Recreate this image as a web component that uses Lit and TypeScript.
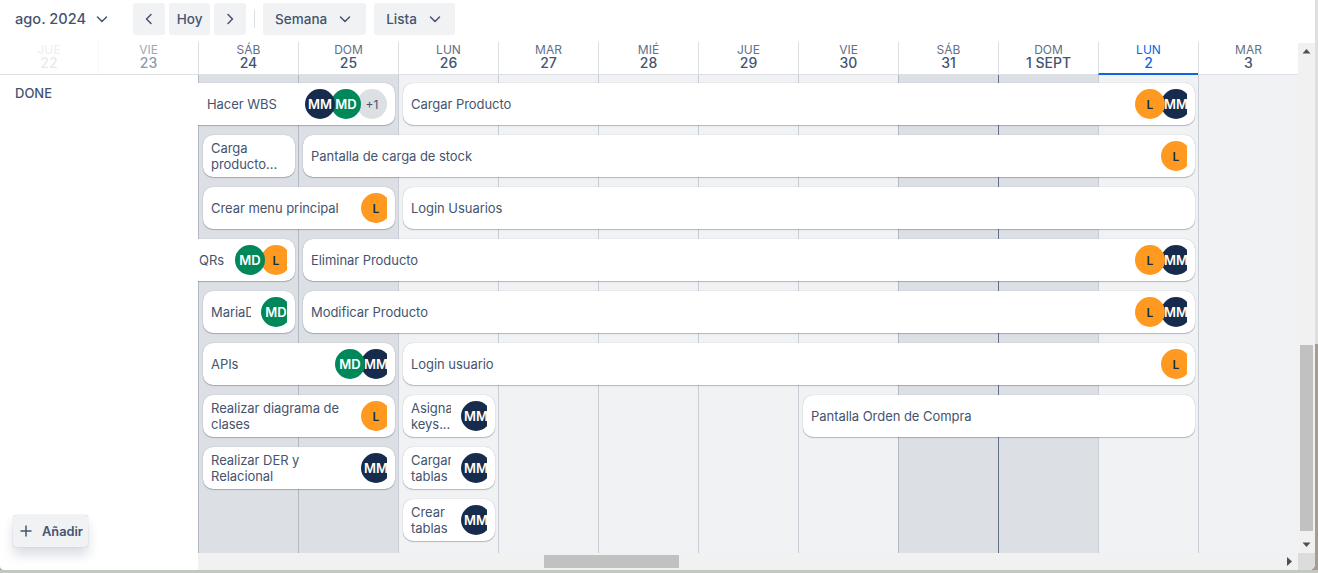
import { LitElement, css, html, nothing, svg } from 'lit'
import { customElement } from 'lit/decorators.js'

type Who = 'MM' | 'MD' | 'L' | '+1'

interface Task {
  title: string
  row: number
  from: number
  to: number
  who: Who[]
  cut?: 'soft' | 'hard'
}

const DAYS = [
  { name: 'JUE', num: '22', cls: 'far' },
  { name: 'VIE', num: '23', cls: 'near' },
  { name: 'SÁB', num: '24', cls: '' },
  { name: 'DOM', num: '25', cls: '' },
  { name: 'LUN', num: '26', cls: '' },
  { name: 'MAR', num: '27', cls: '' },
  { name: 'MIÉ', num: '28', cls: '' },
  { name: 'JUE', num: '29', cls: '' },
  { name: 'VIE', num: '30', cls: '' },
  { name: 'SÁB', num: '31', cls: '' },
  { name: 'DOM', num: '1 SEPT', cls: '' },
  { name: 'LUN', num: '2', cls: 'today' },
  { name: 'MAR', num: '3', cls: '' },
]

// columns of the timeline, starting at sab 24
const COLS = ['off', 'off', '', '', '', '', '', 'off', 'off first', '', '']

const TASKS: Task[] = [
  { title: 'Hacer WBS', row: 1, from: 1, to: 2, who: ['MM', 'MD', '+1'], cut: 'soft' },
  { title: 'Cargar Producto', row: 1, from: 3, to: 10, who: ['L', 'MM'] },
  { title: 'Carga producto...', row: 2, from: 1, to: 1, who: [] },
  { title: 'Pantalla de carga de stock', row: 2, from: 2, to: 10, who: ['L'] },
  { title: 'Crear menu principal', row: 3, from: 1, to: 2, who: ['L'] },
  { title: 'Login Usuarios', row: 3, from: 3, to: 10, who: [] },
  { title: 'QRs', row: 4, from: 1, to: 1, who: ['MD', 'L'], cut: 'hard' },
  { title: 'Eliminar Producto', row: 4, from: 2, to: 10, who: ['L', 'MM'] },
  { title: 'MariaDB', row: 5, from: 1, to: 1, who: ['MD'] },
  { title: 'Modificar Producto', row: 5, from: 2, to: 10, who: ['L', 'MM'] },
  { title: 'APIs', row: 6, from: 1, to: 2, who: ['MD', 'MM'] },
  { title: 'Login usuario', row: 6, from: 3, to: 10, who: ['L'] },
  { title: 'Realizar diagrama de clases', row: 7, from: 1, to: 2, who: ['L'] },
  { title: 'Asignar keys...', row: 7, from: 3, to: 3, who: ['MM'] },
  { title: 'Pantalla Orden de Compra', row: 7, from: 7, to: 10, who: [] },
  { title: 'Realizar DER y Relacional', row: 8, from: 1, to: 2, who: ['MM'] },
  { title: 'Cargar tablas', row: 8, from: 3, to: 3, who: ['MM'] },
  { title: 'Crear tablas', row: 9, from: 3, to: 3, who: ['MM'] },
]

const AV_CLASS: Record<Who, string> = { MM: 'navy', MD: 'green', L: 'orange', '+1': 'more' }

const chevron = (d: string) => html`<svg class="chev" width="16" height="16" viewBox="0 0 16 16" fill="none">
  <path d=${d} stroke="currentColor" stroke-width="1.5" stroke-linecap="round" stroke-linejoin="round"></path>
</svg>`

const DOWN = 'M3.5 6 8 10.5 12.5 6'
const LEFT = 'M10 3.5 5.5 8l4.5 4.5'
const RIGHT = 'M6 3.5 10.5 8 6 12.5'

const tri = (points: string) => svg`<svg class="tri" width="9" height="9" viewBox="0 0 9 9"><polygon points=${points} fill="#505050"></polygon></svg>`

@customElement('app-root')
export class AppRoot extends LitElement {
  static styles = css`
    :host {
      display: block;
      width: 1318px;
      height: 573px;
      overflow: hidden;
      background: linear-gradient(180deg, #dedfde 0 60%, #a59d92 60% 100%);
      font-family: Inter, 'Noto Sans', sans-serif;
      color: #44546f;
    }
    .window {
      width: 1315px;
      height: 570px;
      background: #fff;
      display: flex;
      flex-direction: column;
      border-radius: 0 0 6px 4px;
      overflow: hidden;
    }
    .bottom {
      height: 3px;
      background: #c4c8c3;
    }
    .toolbar {
      height: 42px;
      box-sizing: border-box;
      padding: 3px 0 0 15px;
      display: flex;
      align-items: flex-start;
      flex: none;
    }
    .month {
      display: flex;
      align-items: center;
      gap: 8px;
      height: 32px;
      margin-right: 23px;
      font-size: 14.6px;
      font-weight: 500;
      white-space: nowrap;
    }
    .btn {
      height: 32px;
      box-sizing: border-box;
      display: flex;
      align-items: center;
      justify-content: center;
      background: #f1f2f4;
      border-radius: 3px;
      font-size: 13.5px;
      font-weight: 500;
      margin-right: 4px;
    }
    .btn.icon { width: 32px; }
    .btn.hoy { width: 41px; }
    .btn.menu { gap: 10px; padding: 0 13px 0 12px; margin-right: 8px; }
    .btn.menu.short { padding-right: 12px; }
    .sep {
      width: 1px;
      height: 18px;
      margin: 7px 8px 0 4px;
      background: #dcdfe4;
    }
    .chev { flex: none; }
    .main {
      flex: 1;
      min-height: 0;
      display: flex;
    }
    .content {
      width: 1298px;
      display: flex;
      flex-direction: column;
    }
    .head {
      display: grid;
      grid-template-columns: 98px repeat(12, 100px);
      height: 33px;
      box-sizing: border-box;
      border-bottom: 1px solid #dcdfe4;
      flex: none;
    }
    .day {
      border-left: 1px solid #dcdfe4;
      text-align: center;
      font-size: 12px;
      line-height: 13px;
      padding-top: 1px;
      color: #626f86;
      box-sizing: border-box;
      height: 32px;
    }
    .day:first-child { border-left: 0; }
    .day b {
      display: block;
      font-size: 14px;
      font-weight: 500;
      line-height: 13px;
      color: #44546f;
    }
    .day.far { opacity: 0.12; }
    .day.near { opacity: 0.6; border-left-color: #f1f2f4; }
    .day.today {
      color: #0c66e4;
      border-bottom: 2px solid #0c66e4;
      height: 33px;
    }
    .day.today b { color: #0c66e4; }
    .body {
      flex: 1;
      min-height: 0;
      display: flex;
    }
    .panel {
      width: 198px;
      flex: none;
      display: flex;
      flex-direction: column;
      justify-content: space-between;
      box-sizing: border-box;
      padding: 10px 0 23px 15px;
    }
    .swim {
      font-size: 13px;
      font-weight: 500;
      line-height: 16px;
    }
    .add {
      align-self: flex-start;
      margin-left: -2px;
      width: 75px;
      height: 32px;
      box-sizing: border-box;
      padding-left: 5px;
      display: flex;
      align-items: center;
      gap: 8px;
      background: #f1f2f4;
      border-radius: 3px;
      box-shadow: 0 8px 12px rgba(9, 30, 66, 0.15), 0 0 1px rgba(9, 30, 66, 0.31);
      font-size: 12.8px;
      font-weight: 600;
    }
    .scroller {
      width: 1100px;
      display: flex;
      flex-direction: column;
    }
    .timeline {
      flex: 1;
      min-height: 0;
      overflow: hidden;
      display: grid;
      grid-template-columns: repeat(11, 100px);
      grid-template-rows: repeat(9, 52px) 1fr;
    }
    .col {
      grid-row: 1 / -1;
      background: #f1f2f4;
      border-left: 1px solid #c9ced6;
    }
    .col.off { background: #dcdfe4; border-left-color: #b3b9c4; }
    .col.first { border-left-color: #626f86; }
    .card {
      margin: 8px 3px 2px 5px;
      height: 42px;
      box-sizing: border-box;
      padding: 0 8px;
      display: flex;
      align-items: center;
      gap: 10px;
      background: #fff;
      border-radius: 10px;
      box-shadow: 0 1px 1px rgba(9, 30, 66, 0.25), 0 0 1px rgba(9, 30, 66, 0.31);
      min-width: 0;
      z-index: 1;
    }
    .card.soft { margin-left: -12px; padding-left: 21px; }
    .card.hard { margin-left: -12px; padding-left: 13px; }
    .title {
      flex: 1;
      min-width: 0;
      overflow: hidden;
      font-size: 13px;
      line-height: 16px;
      letter-spacing: -0.05px;
    }
    .team {
      display: flex;
      flex: none;
      overflow: hidden;
      height: 30px;
    }
    .av {
      width: 30px;
      height: 30px;
      flex: none;
      margin-right: -4px;
      border-radius: 50%;
      position: relative;
      display: flex;
      align-items: center;
      justify-content: center;
      font-size: 13px;
      font-weight: 600;
      color: #fff;
    }
    .av.navy { background: #172b4d; }
    .av.green { background: #00875a; }
    .av.orange { background: #ff991f; color: #172b4d; font-size: 12px; }
    .av.more {
      background: #dcdfe4;
      color: #44546f;
      font-size: 12px;
      font-weight: 400;
      margin-right: 0;
    }
    .hbar {
      height: 17px;
      flex: none;
      background: #f1f1f1;
      box-sizing: border-box;
      padding: 2px 0 2px 346px;
      display: flex;
      align-items: center;
      justify-content: space-between;
    }
    .hthumb {
      width: 135px;
      height: 13px;
      background: #c1c1c1;
    }
    .hbar .tri { margin-right: 4px; }
    .vbar {
      width: 17px;
      flex: none;
      margin-top: 1px;
      background: #f1f1f1;
      display: flex;
      flex-direction: column;
      align-items: center;
    }
    .arrow {
      width: 17px;
      height: 17px;
      flex: none;
      display: flex;
      align-items: center;
      justify-content: center;
    }
    .vthumb {
      width: 13px;
      height: 186px;
      flex: none;
      margin: auto 0 5px;
      background: #c1c1c1;
    }
    .corner {
      width: 17px;
      height: 17px;
      flex: none;
      background: #dcdcdc;
    }
  `

  private renderCard(t: Task) {
    const pos = `grid-row:${t.row};grid-column:${t.from} / ${t.to + 1}`
    return html`<div class="card ${t.cut ?? ''}" style=${pos}>
      <div class="title">${t.title}</div>
      ${t.who.length
        ? html`<div class="team">
            ${t.who.map(
              (w, i) =>
                html`<div class="av ${AV_CLASS[w]}" style="z-index:${t.who.length - i}">${w}</div>`,
            )}
          </div>`
        : nothing}
    </div>`
  }

  render() {
    return html`
      <div class="window">
        <div class="toolbar">
          <div class="month">ago. 2024 ${chevron(DOWN)}</div>
          <div class="btn icon">${chevron(LEFT)}</div>
          <div class="btn hoy">Hoy</div>
          <div class="btn icon">${chevron(RIGHT)}</div>
          <div class="sep"></div>
          <div class="btn menu">Semana ${chevron(DOWN)}</div>
          <div class="btn menu short">Lista ${chevron(DOWN)}</div>
        </div>
        <div class="main">
          <div class="content">
            <div class="head">
              ${DAYS.map((d) => html`<div class="day ${d.cls}">${d.name}<b>${d.num}</b></div>`)}
            </div>
            <div class="body">
              <div class="panel">
                <div class="swim">DONE</div>
                <div class="add">
                  <svg width="16" height="16" viewBox="0 0 16 16" fill="none">
                    <path d="M8 2.5v11M2.5 8h11" stroke="currentColor" stroke-width="1.5"></path>
                  </svg>
                  Añadir
                </div>
              </div>
              <div class="scroller">
                <div class="timeline">
                  ${COLS.map((c, i) => html`<div class="col ${c}" style="grid-column:${i + 1}"></div>`)}
                  ${TASKS.map((t) => this.renderCard(t))}
                </div>
                <div class="hbar">
                  <div class="hthumb"></div>
                  ${tri('2,0 7,4.5 2,9')}
                </div>
              </div>
            </div>
          </div>
          <div class="vbar">
            <div class="arrow">${tri('0.5,6.5 4.5,2 8.5,6.5')}</div>
            <div class="vthumb"></div>
            <div class="arrow">${tri('0.5,2.5 8.5,2.5 4.5,7')}</div>
            <div class="corner"></div>
          </div>
        </div>
      </div>
      <div class="bottom"></div>
    `
  }
}
